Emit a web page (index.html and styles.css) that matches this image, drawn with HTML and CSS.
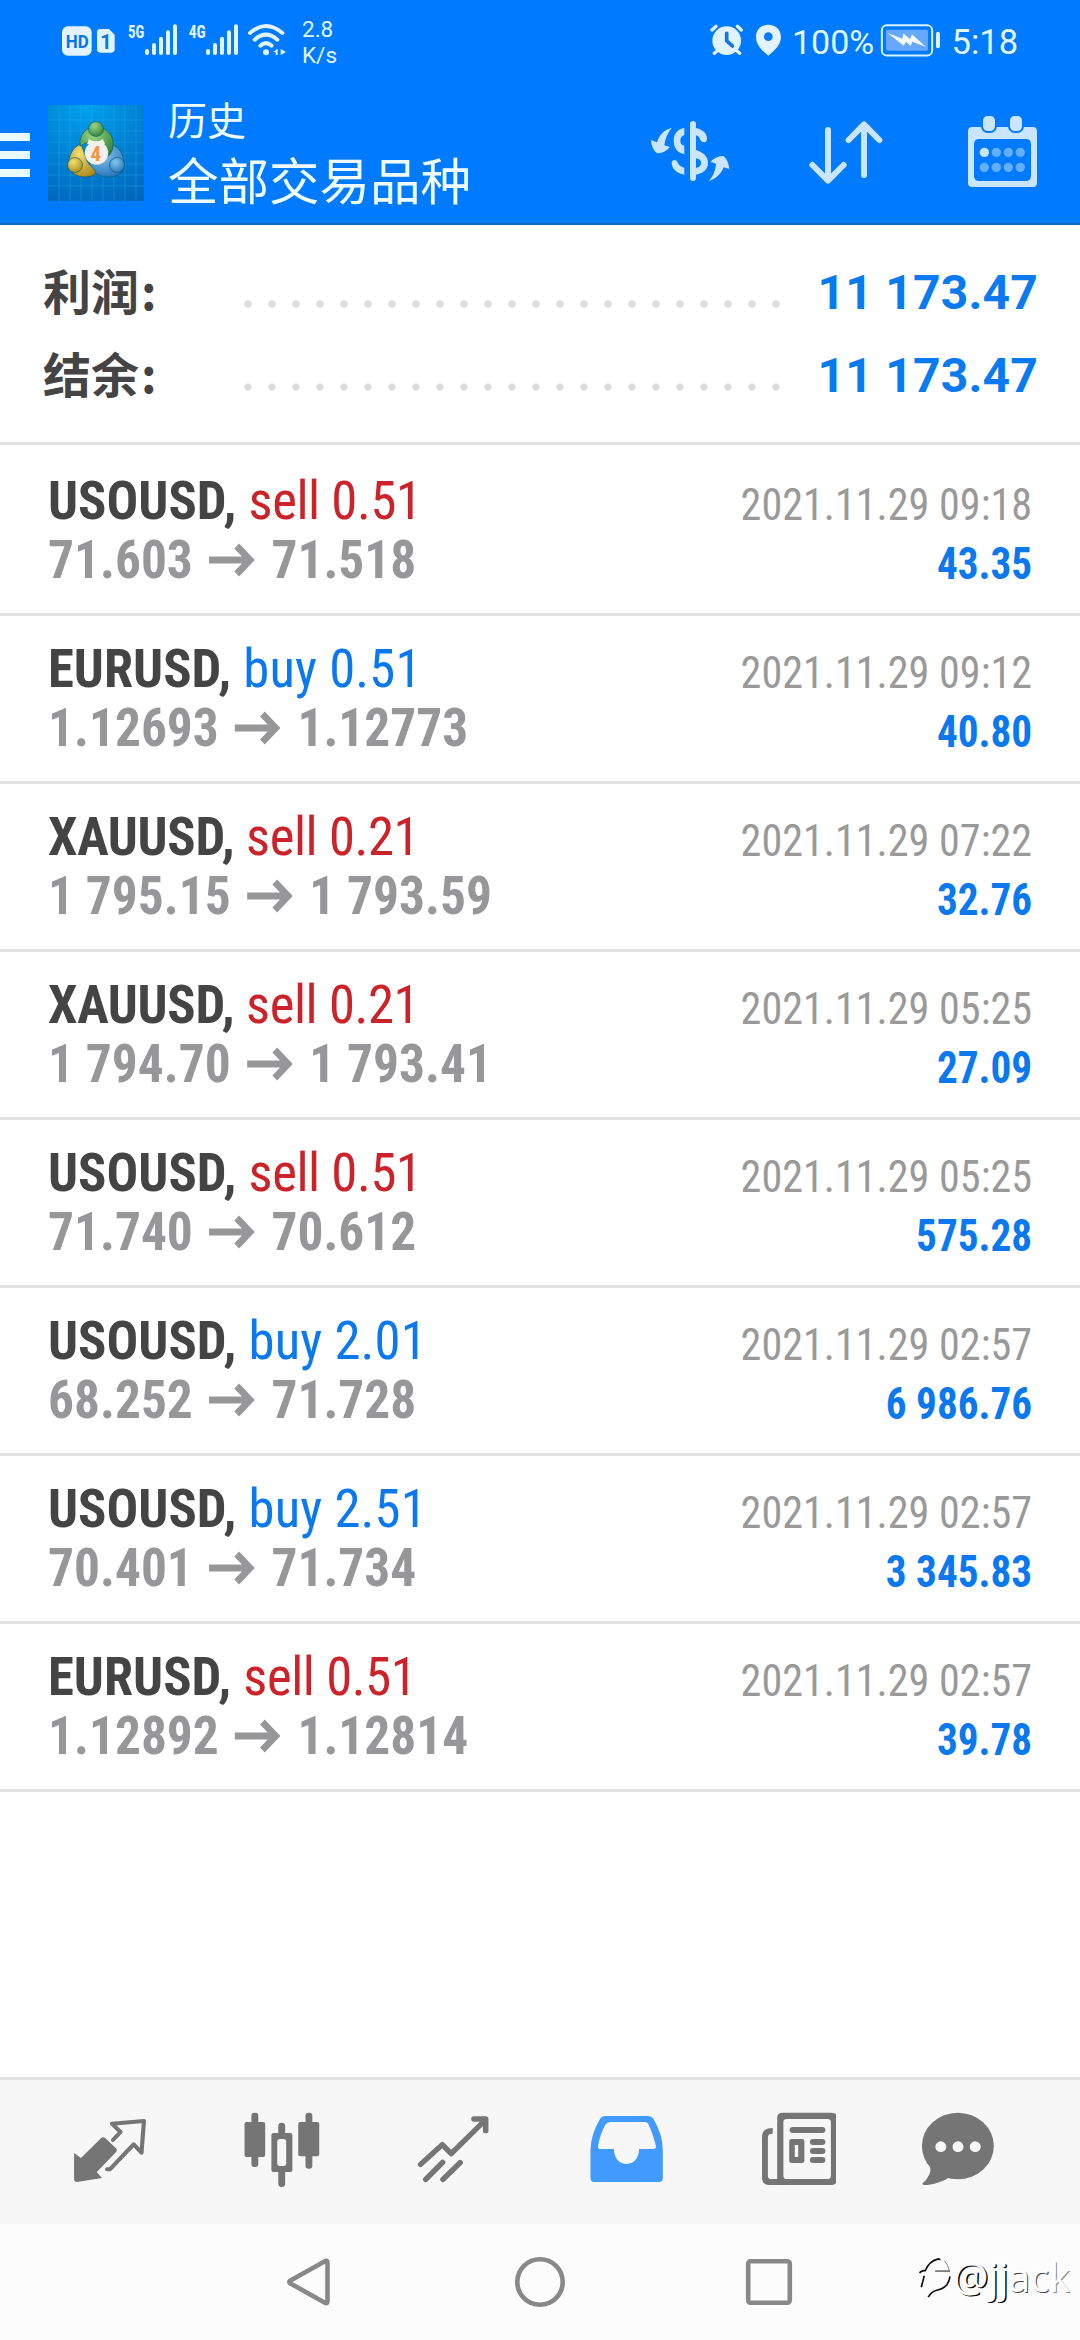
FILE: index.html
```html
<!DOCTYPE html>
<html lang="zh-CN">
<head>
<meta charset="utf-8">
<title>历史</title>
<link rel="stylesheet" href="styles.css">
</head>
<body>
<div class="screen">
  <header class="top">
    <div class="status">
      <svg class="status-left" viewBox="60 60 690 120">
        <rect x="66" y="79" width="89" height="88" rx="18"/>
        <text class="cut hd" x="77" y="143" textLength="69" lengthAdjust="spacingAndGlyphs">HD</text>
        <path d="M181 87H207L224 104V148Q224 158 214 158H181Q171 158 171 148V97Q171 87 181 87Z"/>
        <text class="cut sim" x="181" y="146">1</text>
        <text class="net" x="264" y="114" textLength="49" lengthAdjust="spacingAndGlyphs">5G</text>
        <path d="M315 152q0-5 6-5t6 5v8q0 5-6 5t-6-5zM336 135q0-6 6-6t6 6v25q0 5-6 5t-6-5zM357 116q0-6 6-6t6 6v44q0 5-6 5t-6-5zM378 97q0-6 6-6t6 6v63q0 5-6 5t-6-5zM399 79q0-6 6-6t6 6v81q0 5-6 5t-6-5z"/>
        <text class="net" x="446" y="114" textLength="51" lengthAdjust="spacingAndGlyphs">4G</text>
        <path d="M498 152q0-5 6-5t6 5v8q0 5-6 5t-6-5zM519 135q0-6 6-6t6 6v25q0 5-6 5t-6-5zM540 116q0-6 6-6t6 6v44q0 5-6 5t-6-5zM561 97q0-6 6-6t6 6v63q0 5-6 5t-6-5zM582 79q0-6 6-6t6 6v81q0 5-6 5t-6-5z"/>
        <g class="wave"><path d="M630 99Q678 57 727 99"/><path d="M644 119Q678 89 712 119"/><path d="M661 137Q678 122 695 137"/></g>
        <circle cx="678" cy="157" r="9"/>
        <path d="M713 146V165H707V156H699ZM722 147L738 156L722 165Z"/>
      </svg>
      <div class="speed"><span>2.8</span><span>K/s</span></div>
      <svg class="status-alerts" viewBox="150 70 216 100">
        <circle cx="200" cy="123" r="43"/>
        <path class="leg" d="M156 91L168 80M244 91L232 80M163 161L175 150M239 161L227 150"/>
        <path class="hand" d="M200 101V124L217 139"/>
        <path fill-rule="evenodd" d="M325 75C303 75 288 91 288 112C288 137 309 155 325 168C341 155 363 137 363 112C363 91 348 75 325 75ZM325 98A13 13 0 1 1 325 124A13 13 0 1 1 325 98Z"/>
      </svg>
      <span class="percent">100%</span>
      <svg class="battery" viewBox="660 70 183 103">
        <rect class="shell" x="665.500" y="76.500" width="151" height="91" rx="15"/>
        <rect class="charge" x="678" y="90" width="126" height="63" rx="5"/>
        <path class="bolt" d="M682 99L727 117L730 101L750 118L756 104L798 142L757 126L752 139L738 126L731 138Z"/>
        <rect x="828" y="96" width="12" height="50" rx="6"/>
      </svg>
      <span class="clock">5:18</span>
    </div>
    <div class="appbar">
      <div class="menu"><i></i><i></i><i></i></div>
      <svg class="logo" viewBox="0 0 96 96">
        <defs>
          <radialGradient id="sky" cx=".4" cy="0" r="1.100"><stop offset="0" stop-color="#00a2ee"/><stop offset=".5" stop-color="#0082d4"/><stop offset="1" stop-color="#0067bd"/></radialGradient>
          <radialGradient id="green" cx=".4" cy=".3" r=".8"><stop offset="0" stop-color="#9bd582"/><stop offset="1" stop-color="#257b35"/></radialGradient>
          <radialGradient id="gold" cx=".4" cy=".3" r=".8"><stop offset="0" stop-color="#f4e070"/><stop offset="1" stop-color="#a48617"/></radialGradient>
          <radialGradient id="azure" cx=".4" cy=".3" r=".8"><stop offset="0" stop-color="#86c7f0"/><stop offset="1" stop-color="#1d6fb5"/></radialGradient>
        </defs>
        <rect width="96" height="96" fill="url(#sky)"/>
        <path class="grid" d="M0 15H96M0 26H96M0 37H96M0 48H96M0 59H96M0 70H96M0 81H96M11 0V96M22 0V96M33 0V96M44 0V96M55 0V96M66 0V96M77 0V96M88 0V96"/>
        <g stroke="#14506b" stroke-opacity=".6" stroke-width="1">
          <path fill="url(#azure)" d="M63 39C74 43 78 55 75 65C71 73 58 74 49 69C44 66 42 61 41 56L61 49Z"/>
          <path fill="url(#gold)" d="M33 39C24 42 20 52 21 62C24 72 37 74 46 70C52 66 40 62 38 53Z"/>
          <path fill="url(#green)" d="M32 41C31 29 38 22 48 22C59 22 67 31 65 42C64 48 61 51 59 52L53 38L40 37Z"/>
          <circle cx="48" cy="24" r="7.500" fill="url(#green)"/>
          <circle cx="27" cy="60" r="7.500" fill="url(#gold)"/>
          <circle cx="69" cy="60" r="7.500" fill="url(#azure)"/>
        </g>
        <path fill="#ecf5de" d="M41 34Q48 39 55 34L57 39H39Z"/>
        <circle cx="48.500" cy="48" r="11.700" fill="#f4f0ee"/>
        <text class="four" x="42.500" y="55.500">4</text>
      </svg>
      <div class="titles"><span class="sub">历史</span><span class="main">全部交易品种</span></div>
      <svg class="act currency" viewBox="30 78 240 210">
        <rect x="150" y="93" width="18" height="180" rx="9"/>
        <path d="M133 114C112 117 101 132 101 152C101 174 112 188 133 192V167C124 165 121 160 121 152C121 143 125 138 133 135Z"/>
        <path d="M166 113C187 118 201 128 201 146C200 161 187 159 181 150C178 141 174 137 166 135Z"/>
        <path d="M95 219C95 207 111 207 113 218C117 226 124 231 133 233V254C110 250 96 237 95 219Z"/>
        <path d="M166 179C190 187 204 198 204 218C204 238 190 250 166 254V234C178 232 183 228 183 219C183 210 178 207 166 205Z"/>
        <path d="M95 114C74 118 58 133 51 157L33 150C34 168 41 182 52 190C66 190 79 183 90 171L73 166C76 146 82 130 95 114Z"/>
        <path d="M206 273C228 267 243 252 251 232L268 237C266 218 260 206 250 198C236 198 222 204 211 215L228 221C226 243 219 259 206 273Z"/>
      </svg>
      <svg class="act sort" viewBox="504 78 228 210"><path d="M564 120V270M517 225L564 272L611 225M672 255V104M626 150L672 103L718 150"/></svg>
      <svg class="act calendar" viewBox="981 75 213 219">
        <path fill-rule="evenodd" d="M997 111H1178Q1191 111 1191 124V278Q1191 291 1178 291H997Q984 291 984 278V124Q984 111 997 111ZM1018 147Q1002 147 1002 163V257Q1002 273 1018 273H1157Q1173 273 1173 257V163Q1173 147 1157 147Z"/>
        <rect class="post" x="1026" y="75" width="42" height="51" rx="17"/>
        <rect class="post" x="1107" y="75" width="42" height="51" rx="17"/>
        <circle cx="1033" cy="187" r="14"/>
        <g class="dim"><circle cx="1069" cy="187" r="14"/><circle cx="1105" cy="187" r="14"/><circle cx="1141" cy="187" r="14"/><circle cx="1033" cy="232" r="14"/><circle cx="1069" cy="232" r="14"/><circle cx="1105" cy="232" r="14"/><circle cx="1141" cy="232" r="14"/></g>
      </svg>
    </div>
  </header>

  <section class="summary">
    <div class="total"><span class="label">利润<span class="colon">:</span></span><span class="dots"></span><span class="sum">11 173.47</span></div>
    <div class="total"><span class="label">结余<span class="colon">:</span></span><span class="dots"></span><span class="sum">11 173.47</span></div>
  </section>

  <main class="deals">
    <div class="deal">
      <div class="left"><div class="name">USOUSD, <span class="sell">sell 0.51</span></div><div class="prices">71.603<svg class="arrow" viewBox="0 0 48 34"><path d="M0 17H44M29 3L43 17L29 31"/></svg>71.518</div></div>
      <div class="right"><div class="date">2021.11.29 09:18</div><div class="profit">43.35</div></div>
    </div>
    <div class="deal">
      <div class="left"><div class="name">EURUSD, <span class="buy">buy 0.51</span></div><div class="prices">1.12693<svg class="arrow" viewBox="0 0 48 34"><path d="M0 17H44M29 3L43 17L29 31"/></svg>1.12773</div></div>
      <div class="right"><div class="date">2021.11.29 09:12</div><div class="profit">40.80</div></div>
    </div>
    <div class="deal">
      <div class="left"><div class="name tight">XAUUSD, <span class="sell">sell 0.21</span></div><div class="prices">1 795.15<svg class="arrow" viewBox="0 0 48 34"><path d="M0 17H44M29 3L43 17L29 31"/></svg>1 793.59</div></div>
      <div class="right"><div class="date">2021.11.29 07:22</div><div class="profit">32.76</div></div>
    </div>
    <div class="deal">
      <div class="left"><div class="name tight">XAUUSD, <span class="sell">sell 0.21</span></div><div class="prices">1 794.70<svg class="arrow" viewBox="0 0 48 34"><path d="M0 17H44M29 3L43 17L29 31"/></svg>1 793.41</div></div>
      <div class="right"><div class="date">2021.11.29 05:25</div><div class="profit">27.09</div></div>
    </div>
    <div class="deal">
      <div class="left"><div class="name">USOUSD, <span class="sell">sell 0.51</span></div><div class="prices">71.740<svg class="arrow" viewBox="0 0 48 34"><path d="M0 17H44M29 3L43 17L29 31"/></svg>70.612</div></div>
      <div class="right"><div class="date">2021.11.29 05:25</div><div class="profit">575.28</div></div>
    </div>
    <div class="deal">
      <div class="left"><div class="name">USOUSD, <span class="buy">buy 2.01</span></div><div class="prices">68.252<svg class="arrow" viewBox="0 0 48 34"><path d="M0 17H44M29 3L43 17L29 31"/></svg>71.728</div></div>
      <div class="right"><div class="date">2021.11.29 02:57</div><div class="profit">6 986.76</div></div>
    </div>
    <div class="deal">
      <div class="left"><div class="name">USOUSD, <span class="buy">buy 2.51</span></div><div class="prices">70.401<svg class="arrow" viewBox="0 0 48 34"><path d="M0 17H44M29 3L43 17L29 31"/></svg>71.734</div></div>
      <div class="right"><div class="date">2021.11.29 02:57</div><div class="profit">3 345.83</div></div>
    </div>
    <div class="deal">
      <div class="left"><div class="name">EURUSD, <span class="sell">sell 0.51</span></div><div class="prices">1.12892<svg class="arrow" viewBox="0 0 48 34"><path d="M0 17H44M29 3L43 17L29 31"/></svg>1.12814</div></div>
      <div class="right"><div class="date">2021.11.29 02:57</div><div class="profit">39.78</div></div>
    </div>
  </main>

  <nav class="tabs">
    <svg class="tab" viewBox="180 132 278.800 288" preserveAspectRatio="none">
      <path d="M215 279L235 294L293 235Q299 229 306 235L337 265Q342 270 337 276L281 336L296 354L224 366Q215 366 215 357Z"/>
      <path class="line" stroke-width="12" d="M328 240L350 216L325 191L418 183L411 278L388 253L319 328L311 328"/>
    </svg>
    <svg class="tab" viewBox="672.600 132 278.800 288" preserveAspectRatio="none">
      <rect x="709" y="186" width="60" height="105" rx="6"/><rect x="729" y="158" width="20" height="163" rx="9"/>
      <path fill-rule="evenodd" d="M793 219H842Q848 219 848 225V330Q848 336 842 336H793Q787 336 787 330V225Q787 219 793 219ZM812 237Q804 237 804 245V310Q804 318 812 318H822Q830 318 830 310V245Q830 237 822 237Z"/>
      <path d="M807 224V197Q808 188 817 188Q826 188 827 197V224ZM807 330V372Q808 381 817 381Q826 381 827 372V330Z"/>
      <rect x="865" y="186" width="61" height="103" rx="6"/><rect x="886" y="158" width="20" height="168" rx="9"/>
    </svg>
    <svg class="tab" viewBox="1165.100 132 278.800 288" preserveAspectRatio="none">
      <path class="line" stroke-width="16" d="M1222 313L1285 254L1311 281L1410 180M1377 177H1411V212"/>
      <path class="line" stroke-width="16" d="M1237 358L1286 307M1287 358L1337 308"/>
    </svg>
    <svg class="tab active" viewBox="89.400 132 278.800 288" preserveAspectRatio="none">
      <path fill-rule="evenodd" d="M189 168H312Q322 168 328 175Q356 225 356 270V355Q356 366 345 366H157Q146 366 146 355V270Q147 222 175 175Q180 168 189 168ZM204 186Q194 186 189 194Q174 222 168 258Q167 267 174 267H214C214 327 287 327 287 267H330Q337 267 336 258Q327 220 314 192Q311 186 303 186Z"/>
    </svg>
    <svg class="tab" viewBox="582 132 278.800 288" preserveAspectRatio="none">
      <path fill-rule="evenodd" d="M706 158H848Q864 158 864 174V359Q864 375 848 375H690V174Q690 158 706 158ZM718 177Q708 177 708 187V347Q708 357 718 357H836Q846 357 846 347V187Q846 177 836 177Z"/>
      <path d="M677 204V221Q663 221 663 231V347Q663 357 673 357H695V375H666Q646 375 646 354V229Q646 204 677 204Z"/>
      <rect x="726" y="201" width="104" height="18" rx="9"/><rect x="785" y="237" width="45" height="18" rx="9"/><rect x="785" y="264" width="45" height="18" rx="9"/><rect x="785" y="291" width="45" height="18" rx="9"/>
      <path fill-rule="evenodd" d="M732 237H762Q769 237 769 244V302Q769 309 762 309H732Q725 309 725 302V244Q725 237 732 237ZM741 255V291H751V255Z"/>
    </svg>
    <svg class="tab" viewBox="1074.500 132 278.800 288" preserveAspectRatio="none">
      <ellipse cx="1213.500" cy="258" rx="104.500" ry="99.500"/>
      <path d="M1122 305Q1140 324 1131 343Q1123 361 1110 371Q1111 376 1125 375Q1162 370 1187 353L1200 330Z"/>
      <g class="hole"><circle cx="1164" cy="260" r="16"/><circle cx="1214" cy="260" r="16"/><circle cx="1264" cy="260" r="16"/></g>
    </svg>
  </nav>

  <footer class="sysnav">
    <svg viewBox="0 0 50 50"><path d="M38.500 4.500Q41.500 2.500 41.500 6V44Q41.500 47.500 38.500 45.500L4.500 26.500Q2 25 4.500 23.500Z"/></svg>
    <svg viewBox="0 0 50 50"><circle cx="25" cy="25" r="22.700"/></svg>
    <svg viewBox="0 0 50 50"><rect x="4.200" y="4.200" width="41.600" height="41.600" rx="2.500"/></svg>
    <div class="mark">
      <svg viewBox="108 60 100 132"><path d="M113 114Q118 106 130 107Q142 77 170 71L176 74"/><path d="M160 108H205" stroke-width="3"/><path d="M127 122L118 157"/><path d="M205 124Q200 160 165 166Q148 170 139 187"/><path d="M188 77Q200 90 203 107" stroke-width="1.500"/></svg>
      <span>@jj<span class="soft">ac</span><span class="faint">k</span></span>
    </div>
  </footer>
</div>
</body>
</html>
```
FILE: styles.css
```css
* { box-sizing: border-box; }
body { margin: 0; background: #fff; font-family: Roboto, "Noto Sans CJK SC", sans-serif; }
svg { display: block; flex: none; }
.screen { width: 1080px; height: 2340px; display: flex; flex-direction: column; overflow: hidden; }

.top { height: 225px; background: #007aff; border-bottom: 2px solid #1769b8; color: #e2f6ff; }
.status { height: 80px; display: flex; align-items: flex-start; padding-left: 60px; fill: #e0f3ff; }
.status-left { width: 230px; height: 40px; margin-top: 20px; }
.cut { fill: #0a74e4; font-weight: 700; font-family: Roboto, sans-serif; }
.hd { font-size: 56px; }
.sim { font-size: 60px; }
.net { font-family: "Roboto Condensed", Roboto, sans-serif; font-weight: 700; font-size: 53px; }
.wave { fill: none; stroke: #e0f3ff; stroke-width: 12; stroke-linecap: round; }
.speed { width: 40px; margin: 16px 0 0 12px; display: flex; flex-direction: column; font-size: 22.500px; line-height: 26px; }
.status-alerts { width: 72px; height: 33.300px; margin: 23.300px 0 0 368px; }
.leg { stroke: #e0f3ff; stroke-width: 10; stroke-linecap: round; }
.hand { fill: none; stroke: #1478e0; stroke-width: 11; stroke-linecap: round; stroke-linejoin: round; }
.percent { width: 88px; margin: 22px 0 0 10px; font-size: 34px; line-height: 40px; }
.battery { width: 61px; height: 34.300px; margin-top: 23.300px; }
.shell { fill: none; stroke: #d4f2ff; stroke-width: 6; }
.charge { fill: #66a8ff; }
.bolt { fill: #f2f9ff; }
.clock { margin: 22px 0 0 10.500px; font-size: 34.500px; line-height: 40px; }

.appbar { height: 143px; display: flex; align-items: flex-start; padding-top: 1px; }
.menu { width: 30px; height: 44px; margin-top: 52px; display: flex; flex-direction: column; justify-content: space-between; }
.menu i { height: 8px; background: #e8fbff; }
.logo { width: 96px; height: 96px; margin: 24px 24px 0 18px; }
.grid { stroke: #2fb0ee; stroke-opacity: .35; fill: none; stroke-width: 1; }
.four { fill: #ef9647; font: 700 21px "Roboto Condensed", Roboto, sans-serif; }
.titles { width: 483px; padding-top: 14px; display: flex; flex-direction: column; gap: 7px; font-family: "Noto Sans CJK SC", sans-serif; color: #f0fdff; white-space: nowrap; }
.sub { font-size: 39px; line-height: 46px; }
.main { font-size: 50.500px; line-height: 60px; }
.act { height: 70px; margin-top: 35px; fill: #c9e5ff; }
.currency { width: 80px; margin-left: -1px; }
.sort { width: 76px; margin-left: 78px; fill: none; stroke: #c9e5ff; stroke-width: 18; stroke-linecap: round; stroke-linejoin: round; }
.calendar { width: 71px; height: 73px; margin: 34px 0 0 83px; }
.post { stroke: #007aff; stroke-width: 6; }
.dim { fill: #61afff; }

.summary { height: 220px; padding: 26px 42px 0; border-bottom: 3px solid #e2e2e2; }
.total { height: 83px; display: flex; justify-content: space-between; font-weight: 700; }
.label { width: 202px; padding-left: 1px; font: 700 48px/77px "Noto Sans CJK SC", sans-serif; color: #444; }
.colon { margin-left: 2px; }
.dots { width: 552px; height: 8px; margin: 49px auto 0 -8px; background: radial-gradient(circle at center, #dedede 3.300px, transparent 4.100px) 0 0 / 24px 8px repeat-x; }
.sum { font-size: 48px; line-height: 83px; letter-spacing: .2px; color: #0a7af0; }

.deals { flex: 1; }
.deal { height: 168px; padding: 23px 48px 0; border-bottom: 3px solid #e2e2e2; display: flex; justify-content: space-between; font-family: "Roboto Condensed", Roboto, sans-serif; white-space: nowrap; line-height: 59px; }
.deal:first-child { height: 171px; padding-top: 26px; }
.name { font-size: 54px; font-weight: 700; color: #444; transform: scaleX(.976); transform-origin: left; }
.tight { letter-spacing: -.35px; }
.name span { font-weight: 400; }
.sell { color: #cc2229; letter-spacing: -.45px; }
.buy { color: #0a78ee; letter-spacing: .1px; }
.prices { display: flex; align-items: center; font-size: 54px; font-weight: 700; color: #97979a; transform: scaleX(.952); transform-origin: left; }
.arrow { width: 50.400px; height: 34px; margin: 1px 16.500px 0 15.700px; fill: none; stroke: #97979a; stroke-width: 7; }
.right { padding-top: 4px; font-size: 45px; text-align: right; }
.date { color: #999; transform: scaleX(.937); transform-origin: right; }
.profit { font-weight: 700; color: #0a78ee; transform: scaleX(.915); transform-origin: right; }

.tabs { height: 147px; border-top: 3px solid #e3e3e3; background: #f7f7f7; display: flex; justify-content: space-between; padding: 24px 74px 0 62px; }
.tab { width: 96px; height: 96px; fill: #757575; }
.line { fill: none; stroke: #757575; stroke-linecap: round; stroke-linejoin: round; }
.active { fill: #419bff; }
.hole { fill: #f7f7f7; }

.sysnav { position: relative; height: 116px; background: #fcfcfc; display: flex; justify-content: center; align-items: center; gap: 179px; }
.sysnav > svg { width: 50px; height: 50px; fill: none; stroke: #888; stroke-width: 4.600; stroke-linejoin: round; }
.mark { position: absolute; right: 10px; top: 27px; display: flex; align-items: center; color: #fff; font: 400 39.500px/52px "Open Sans", sans-serif; text-shadow: 1.5px 1px 0 #000; }
.mark svg { width: 33px; height: 44px; margin-right: 2px; fill: none; stroke: #111; stroke-width: 5; }
.soft { text-shadow: 1px 1px 0 #444; }
.faint { text-shadow: 1px 1px 0 #888; }
```
